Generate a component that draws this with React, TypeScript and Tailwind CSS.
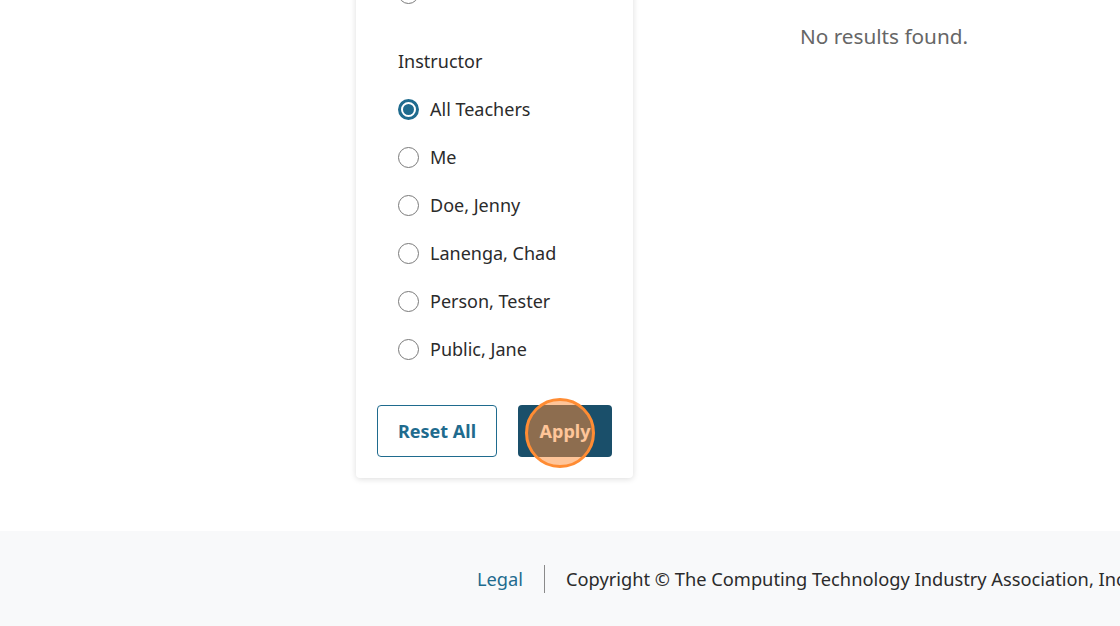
const teachers = ['All Teachers', 'Me', 'Doe, Jenny', 'Lanenga, Chad', 'Person, Tester', 'Public, Jane']

function Radio({ label, checked }: { label: string; checked?: boolean }) {
  return (
    <label className="flex h-12 items-center gap-[11px] text-[18px] text-[#2b2b2b]">
      {checked ? (
        <span className="flex size-[21px] items-center justify-center rounded-full border-[3px] border-[#1f6b8e]">
          <span className="size-[11px] rounded-full bg-[#1f6b8e]" />
        </span>
      ) : (
        <span className="size-[21px] rounded-full border border-[#7a7a7a] bg-white" />
      )}
      <span>{label}</span>
    </label>
  )
}

export default function App() {
  return (
    <div className="flex min-h-[626px] flex-col overflow-hidden bg-white font-['Noto_Sans',sans-serif]">
      <main className="flex pl-[356px]">
        <section className="-mt-[31px] w-[277px] shrink-0 rounded-b-[4px] bg-white px-[21px] pb-[21px] shadow-[0_1px_6px_rgba(0,0,0,0.14)]">
          <div className="pl-[21px]">
            <Radio label="Other" />
            <div className="mt-5 flex h-12 items-center text-[18px] text-[#2b2b2b]">Instructor</div>
            {teachers.map((t, i) => (
              <Radio key={t} label={t} checked={i === 0} />
            ))}
          </div>

          <div className="mt-8 flex items-center justify-between">
            <button className="h-[52px] w-[120px] rounded-[4px] border border-[#1f6b8e] bg-white text-[18px] font-bold text-[#1f6b8e]">
              Reset All
            </button>
            <div className="relative">
              <button className="h-[52px] w-[94px] rounded-[4px] bg-[#1a4f6a] text-[18px] font-bold text-white">
                Apply
              </button>
              <span className="pointer-events-none absolute left-[7px] top-[-7px] size-[70px] rounded-full border-[3px] border-[#ff8c33] bg-[#ff8c33]/50" />
            </div>
          </div>
        </section>

        <div className="ml-[23px] w-[456px] shrink-0 pt-[21px] text-center text-[20.75px] text-[#666666]">No results found.</div>
      </main>

      <footer className="mt-[53px] flex h-[95px] items-center whitespace-nowrap bg-[#f8f9fa] pl-[477px] text-[18.25px]">
        <a className="shrink-0 text-[#1f6b8e]">Legal</a>
        <span className="mx-[21px] h-[28px] w-px shrink-0 bg-[#8a8a8a]" />
        <span className="shrink-0 text-[#2b2b2b]">Copyright © The Computing Technology Industry Association, Inc. All rights reserved.</span>
      </footer>
    </div>
  )
}
